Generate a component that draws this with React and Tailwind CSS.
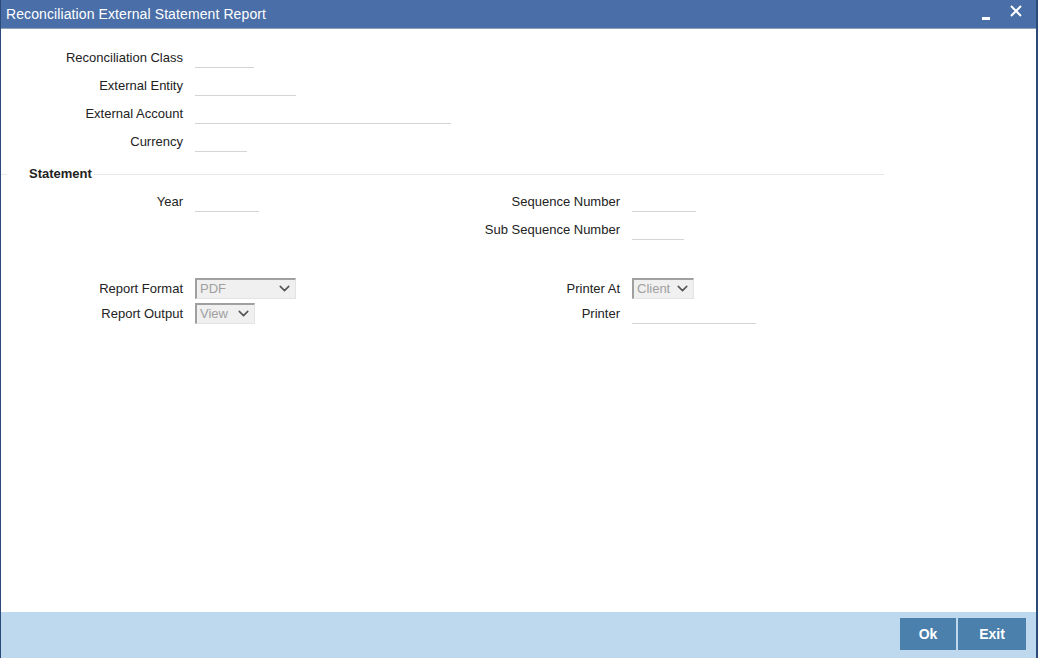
import { ChevronDown } from 'lucide-react';

const font = { fontFamily: '"Liberation Sans", Arial, sans-serif' };

const Label = ({ children }) => (
  <div className="w-[182px] shrink-0 text-right text-[13px] text-[#222]">{children}</div>
);

const Line = ({ w }) => (
  <div className={`${w} shrink-0 h-[20px] border-b border-[#d4d4d4] self-end`} />
);

const Select = ({ value, w }) => (
  <div
    className={`${w} shrink-0 h-[21px] -mt-[1px] flex items-center justify-between bg-[#f0f0f0] border-t-2 border-l-2 border-t-[#a0a0a0] border-l-[#a0a0a0] border-r border-b border-r-[#e3e3e3] border-b-[#e3e3e3] pl-[3px] pr-[2px] text-[13px] text-[#a0a0a0]`}
  >
    <span className="leading-none">{value}</span>
    <ChevronDown size={17} strokeWidth={2.2} className="text-[#555]" />
  </div>
);

const Field = ({ label, children }) => (
  <div className="w-[437px] shrink-0 flex items-center gap-[12px]">
    <Label>{label}</Label>
    <div className="w-[243px] flex">{children}</div>
  </div>
);

const Empty = () => <div className="w-[437px] shrink-0" />;

export default function App() {
  return (
    <div style={font} className="w-[1038px] h-[658px] flex flex-col bg-white border-l border-r-2 border-[#2b4a78] overflow-hidden">
      <div className="h-[29px] shrink-0 bg-[#4a6ea7] border-b border-[#8fa3b5] flex items-center justify-between pl-[5px] pr-[14px]">
        <span className="text-white text-[14px] tracking-[0.1px]">Reconciliation External Statement Report</span>
        <div className="flex items-center gap-[20px] text-white">
          <div className="w-[8px] h-[3px] bg-white mt-[8px]" />
          <svg width="12" height="12" viewBox="0 0 12 12" className="mb-[6px]">
            <path d="M1 1 L11 11 M11 1 L1 11" stroke="white" strokeWidth="2" />
          </svg>
        </div>
      </div>

      <div className="flex-1 flex flex-col pt-[15px]">
        <div className="flex flex-col">
          {[
            ['Reconciliation Class', 'w-[59px]'],
            ['External Entity', 'w-[101px]'],
            ['External Account', 'w-[256px]'],
            ['Currency', 'w-[52px]'],
          ].map(([l, w]) => (
            <div key={l} className="h-[28px] flex items-center">
              <Field label={l}>
                <Line w={w} />
              </Field>
            </div>
          ))}
        </div>

        <div className="mt-[4px] h-[28px] flex items-center w-[883px]">
          <div className="w-[6px] border-t border-[#e8e8e8]" />
          <span className="ml-[22px] mr-[2px] font-bold text-[13px] text-[#222]">Statement</span>
          <div className="flex-1 border-t border-[#e8e8e8]" />
        </div>

        <div className="h-[28px] flex items-center">
          <Field label="Year">
            <Line w="w-[64px]" />
          </Field>
          <Field label="Sequence Number">
            <Line w="w-[64px]" />
          </Field>
        </div>
        <div className="h-[28px] flex items-center">
          <Empty />
          <Field label="Sub Sequence Number">
            <Line w="w-[52px]" />
          </Field>
        </div>

        <div className="mt-[32px] h-[25px] flex items-center">
          <Field label="Report Format">
            <Select value="PDF" w="w-[101px]" />
          </Field>
          <Field label="Printer At">
            <Select value="Client" w="w-[62px]" />
          </Field>
        </div>
        <div className="h-[25px] flex items-center">
          <Field label="Report Output">
            <Select value="View" w="w-[60px]" />
          </Field>
          <Field label="Printer">
            <Line w="w-[124px]" />
          </Field>
        </div>
      </div>

      <div className="h-[46px] shrink-0 bg-[#bed9ed] flex items-start justify-end pt-[6px] pr-[10px] gap-[2px]">
        <button type="button" className="w-[56px] h-[32px] bg-[#4a80ab] text-white font-bold text-[14px]">Ok</button>
        <button type="button" className="w-[68px] h-[32px] bg-[#4a80ab] text-white font-bold text-[14px]">Exit</button>
      </div>
    </div>
  );
}
